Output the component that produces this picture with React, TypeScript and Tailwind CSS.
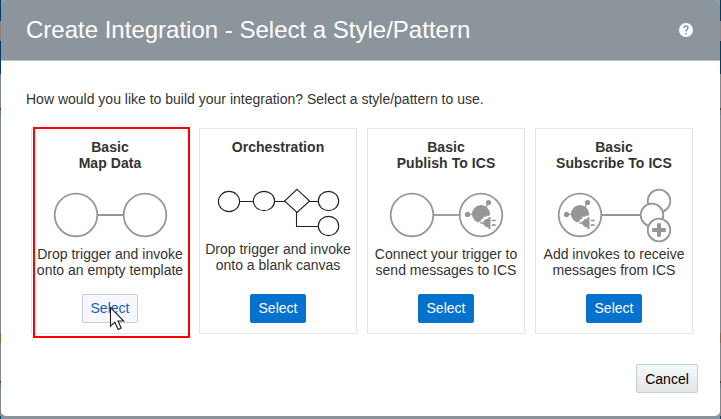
import type { ReactNode } from "react";

function Hub() {
  return (
    <g fill="#969696" stroke="none">
      <path d="M-14 -0.7H0M0 0L6.5 -11.5" stroke="#969696" strokeWidth="1.3" />
      <circle cx="-14" cy="-0.6" r="2.6" />
      <circle cx="7" cy="-12.5" r="2.6" />
      <circle cx="-0.5" cy="-1" r="9" />
      <path d="M-2.6 9V6.4H-0.6V4.2H1.8V1.8H5V0.8H10V9Z" fill="#fff" />
      <path d="M9 2V14H7V12.3H4.8L1.8 9.6V8.8H-1.2V7.2H1.8V6.4L4.8 3.7H7V2Z" />
      <path d="M10.3 4.7H14.2V6.3H10.3ZM10.3 9.3H14.2V10.9H10.3Z" />
    </g>
  );
}

function MapIcon() {
  return (
    <svg className="block h-[60px] w-[156px]" viewBox="32 187 156 60" fill="none" stroke="#969696" strokeWidth="1.8">
      <path d="M97.5 215H123.5" />
      <circle cx="76" cy="215" r="21.3" />
      <circle cx="145" cy="215" r="21.3" />
    </svg>
  );
}

function FlowIcon() {
  return (
    <svg className="block h-[60px] w-[156px]" viewBox="200 187 156 60" fill="#fff" stroke="#222" strokeWidth="1.1">
      <path d="M240 201.5H253M275 201.5H285M309 201.5H318M296.5 212V226.5H318" fill="none" />
      <ellipse cx="229" cy="201.5" rx="10.6" ry="10.1" />
      <ellipse cx="264" cy="201" rx="10.6" ry="9.6" />
      <path d="M297 189.3L309.6 201L297 212.5L284.6 201Z" />
      <ellipse cx="328.5" cy="201" rx="10.2" ry="9.6" />
      <ellipse cx="328.5" cy="226" rx="10.2" ry="9.6" />
    </svg>
  );
}

function PublishIcon() {
  return (
    <svg className="block h-[60px] w-[156px]" viewBox="368 187 156 60" fill="none" stroke="#969696" strokeWidth="1.8">
      <path d="M433.5 215H459.5" />
      <circle cx="412" cy="215" r="21.3" />
      <circle cx="481" cy="215" r="21.3" />
      <g transform="translate(481.5 215)"><Hub /></g>
    </svg>
  );
}

function SubscribeIcon() {
  return (
    <svg className="block h-[60px] w-[156px]" viewBox="536 187 156 60" fill="#fff" stroke="#969696" strokeWidth="1.8">
      <path d="M601.5 215H641" />
      <circle cx="580" cy="215" r="21.3" />
      <g transform="translate(580.5 215)"><Hub /></g>
      <circle cx="659" cy="201" r="11.3" />
      <circle cx="652" cy="215" r="11.3" />
      <circle cx="659" cy="230" r="11.3" />
      <path d="M659 223.2V236.8M652.2 230H665.8" strokeWidth="4" />
    </svg>
  );
}

type CardProps = {
  title: string[];
  text: string[];
  icon: ReactNode;
  hovered?: boolean;
  raised?: boolean;
};

function Card({ title, text, icon, hovered, raised }: CardProps) {
  return (
    <section className="relative flex h-[206px] w-[158px] shrink-0 flex-col items-center border border-[#e4e6e7] pt-[10px]">
      <h2 className="h-12 whitespace-nowrap text-center text-[14px] leading-4 font-bold tracking-[0.06px] text-[#333]">
        {title.map((line) => <span className="block" key={line}>{line}</span>)}
      </h2>
      {icon}
      <p className={`h-[47px] whitespace-nowrap text-center text-[14px] leading-4 text-[#333] ${raised ? "-mt-[6px] mb-[6px]" : "-mt-px mb-px"}`}>
        {text.map((line) => <span className="block" key={line}>{line}</span>)}
      </p>
      <button className={`h-[29px] w-14 shrink-0 rounded-[2px] border text-[14px] leading-[27px] ${hovered ? "border-[#c4ced7] bg-[#f7f8ff] text-[#145fac]" : "border-[#0572ce] bg-[#0572ce] text-white"}`}>
        Select
      </button>
      {hovered && (
        <>
          <div className="pointer-events-none absolute -top-[2px] left-[1px] h-[211px] w-[157px] border-2 border-[#fe0000]" />
          <svg className="absolute top-[177px] left-[77px] h-[26px] w-4" viewBox="0 0 16 26" fill="#fff" stroke="#1a1d28" strokeWidth="1.1">
            <path d="M1.5 1.5V20.2L5.8 16.2L9.2 23.5L12.2 22L9 15H14.8Z" />
          </svg>
        </>
      )}
    </section>
  );
}

function Edge() {
  return (
    <div className="flex h-[419px] w-px shrink-0 flex-col bg-[#7e898f]">
      <i className="h-[21px] bg-[#003c68]" />
      <i className="h-5 bg-[#8f8286]" />
      <i className="h-[33px] bg-[#003c68]" />
      <i className="h-[34px]" />
      <i className="h-[2px] bg-[#623c19]" />
      <i className="h-[5px] bg-[#60839d]" />
      <i className="h-[218px]" />
      <i className="h-[10px] bg-[#93653e]" />
      <i className="h-[38px]" />
      <i className="h-[2px] bg-[#623c19]" />
      <i className="h-[5px] bg-[#60839d]" />
      <i className="h-[28px]" />
      <i className="h-[3px] bg-[#004878]" />
    </div>
  );
}

export default function App() {
  return (
    <div className="flex h-[419px] w-[721px] overflow-hidden bg-[#8b949b] font-['Liberation_Sans',Arial,sans-serif]">
      <Edge />
      <main className="flex h-[416px] w-[719px] flex-col overflow-hidden rounded-[5px] bg-white">
        <header className="flex h-[61px] shrink-0 items-center justify-between border-b border-[#bac3ca] bg-[#8d959c] pr-[27px] pl-[25px]">
          <h1 className="whitespace-nowrap text-[24px] leading-7 text-white">Create Integration - Select a Style/Pattern</h1>
          <svg className="h-[14px] w-[14px]" viewBox="0 0 14 14">
            <circle cx="7" cy="7" r="7" fill="#fff" />
            <path d="M5 5.1C5 2.2 9 2.3 9 4.8C9 6.4 7.1 6.5 7.1 8.6" fill="none" stroke="#858e95" strokeWidth="1.4" />
            <path d="M6.3 10H7.8V11.6H6.3Z" fill="#858e95" />
          </svg>
        </header>
        <p className="mt-[30px] pl-[25px] text-[14px] leading-4 whitespace-nowrap text-[#333]">
          How would you like to build your integration? Select a style/pattern to use.
        </p>
        <div className="mt-[21px] ml-[30px] flex gap-[10px]">
          <Card title={["Basic", "Map Data"]} icon={<MapIcon />} text={["Drop trigger and invoke", "onto an empty template"]} hovered />
          <Card title={["Orchestration"]} icon={<FlowIcon />} text={["Drop trigger and invoke", "onto a blank canvas"]} raised />
          <Card title={["Basic", "Publish To ICS"]} icon={<PublishIcon />} text={["Connect your trigger to", "send messages to ICS"]} />
          <Card title={["Basic", "Subscribe To ICS"]} icon={<SubscribeIcon />} text={["Add invokes to receive", "messages from ICS"]} />
        </div>
        <footer className="mt-[30px] flex justify-end pr-[22px]">
          <button className="h-[29px] w-[62px] rounded-[2px] border border-[#c4ced7] bg-linear-to-b from-[#f1fbfb] via-[#eeeeef] to-[#e3e4e6] pt-px text-[14px] leading-[27px] text-black">Cancel</button>
        </footer>
      </main>
      <Edge />
    </div>
  );
}
